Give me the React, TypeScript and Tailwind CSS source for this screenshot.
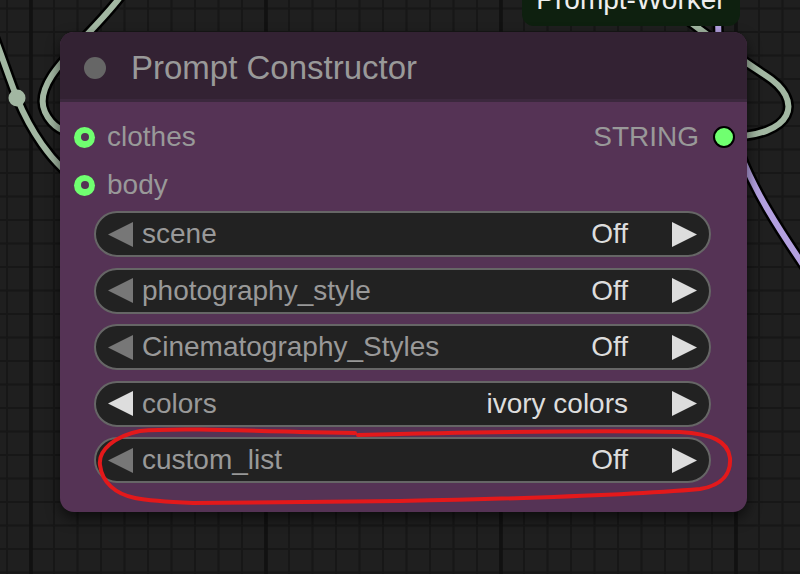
const font = "font-['Liberation_Sans',Arial,sans-serif]";

const widgets = [
  { name: "scene", value: "Off", canPrev: false },
  { name: "photography_style", value: "Off", canPrev: false },
  { name: "Cinematography_Styles", value: "Off", canPrev: false },
  { name: "colors", value: "ivory colors", canPrev: true },
  { name: "custom_list", value: "Off", canPrev: false },
];

const minorX = Array.from({ length: 35 }, (_, i) => 7 + i * 23.5);
const minorY = Array.from({ length: 25 }, (_, i) => 8.5 + i * 23.5);
const majorX = [31, 266, 501, 736];

const linkA = "M 121 -4 C 88 40, 30 80, 45 112 C 50 123, 60 134, 84 136";
const linkB = "M -12 20 C 0 50, 8 75, 17 98 C 28 125, 50 165, 84 185";
const linkC = "M 725 137 C 795 137, 805 100, 765 75 C 745 62, 720 45, 690 22";
const linkD = "M 718 10 C 718 130, 745 180, 810 275";

function CanvasBackdrop() {
  return (
    <svg className="absolute inset-0" width={800} height={574}>
      {minorX.map((x) => (
        <line key={"x" + x} x1={x} y1={0} x2={x} y2={574} stroke="#171717" strokeWidth={2} />
      ))}
      {minorY.map((y) => (
        <line key={"y" + y} x1={0} y1={y} x2={800} y2={y} stroke="#171717" strokeWidth={2} />
      ))}
      {majorX.map((x) => (
        <line key={"m" + x} x1={x} y1={0} x2={x} y2={574} stroke="#111111" strokeWidth={3.5} />
      ))}
      <g fill="none" strokeLinecap="round">
        <path d={linkA} stroke="#000" strokeWidth={11} />
        <path d={linkA} stroke="#a2b7a2" strokeWidth={6} />
        <path d={linkB} stroke="#000" strokeWidth={11} />
        <path d={linkB} stroke="#a2b7a2" strokeWidth={6} />
        <path d={linkC} stroke="#000" strokeWidth={11} />
        <path d={linkC} stroke="#a2b7a2" strokeWidth={6} />
        <path d={linkD} stroke="#000" strokeWidth={11} />
        <path d={linkD} stroke="#b3a0e0" strokeWidth={6} />
      </g>
      <circle cx={17} cy={98} r={8.5} fill="#a2b7a2" />
    </svg>
  );
}

function Triangle({ dir, on }: { dir: "left" | "right"; on: boolean }) {
  return (
    <svg width={25} height={25} viewBox="0 0 25 25" className="shrink-0">
      <polygon
        points={dir === "left" ? "25,0 0,12.5 25,25" : "0,0 25,12.5 0,25"}
        fill={on ? "#dddddd" : "#777777"}
      />
    </svg>
  );
}

function ComboWidget({ name, value, canPrev }: { name: string; value: string; canPrev: boolean }) {
  return (
    <div className="flex h-[46px] items-center rounded-full border-2 border-[#666] bg-[#222] pl-[12px] pr-[12px] text-[28px] leading-none">
      <Triangle dir="left" on={canPrev} />
      <span className="ml-[9px] text-[#999]">{name}</span>
      <span className="ml-auto text-[#ddd]">{value}</span>
      <span className="ml-[44px] flex">
        <Triangle dir="right" on />
      </span>
    </div>
  );
}

function InputDot() {
  return (
    <div className="flex h-[21px] w-[21px] items-center justify-center rounded-full bg-[#70ff70]">
      <div className="h-[8px] w-[8px] rounded-full bg-[#553355]" />
    </div>
  );
}

function PromptConstructor() {
  return (
    <div className="absolute left-[60px] top-[32px] flex h-[480px] w-[687px] flex-col overflow-hidden rounded-[14px] bg-[#553355] shadow-[0_6px_14px_rgba(0,0,0,0.6)]">
      <div className="flex h-[70px] shrink-0 items-center border-b-[3px] border-[#3b283d] bg-[#332233] pl-[24px] pt-[4px]">
        <div className="h-[22px] w-[22px] rounded-full bg-[#666]" />
        <span className="ml-[25px] text-[33px] leading-none text-[#999]">Prompt Constructor</span>
      </div>
      <div className="flex flex-col pt-[11px] text-[28px] leading-none text-[#999]">
        <div className="flex h-[48px] items-center pl-[14px] pr-[12px]">
          <InputDot />
          <span className="ml-[12px]">clothes</span>
          <span className="ml-auto">STRING</span>
          <div className="ml-[14px] h-[22px] w-[22px] rounded-full border-2 border-black bg-[#70ff70]" />
        </div>
        <div className="flex h-[48px] items-center pl-[14px]">
          <InputDot />
          <span className="ml-[12px]">body</span>
        </div>
        <div className="ml-[34px] mr-[36px] mt-[2px] flex flex-col gap-[10.5px]">
          {widgets.map((w) => (
            <ComboWidget key={w.name} {...w} />
          ))}
        </div>
      </div>
    </div>
  );
}

export default function App() {
  return (
    <div className={`relative h-[574px] w-[800px] overflow-hidden bg-[#1f1f1f] ${font}`}>
      <CanvasBackdrop />
      <div className="absolute left-[522px] top-[-30px] flex h-[56px] w-[218px] items-end justify-center rounded-b-[12px] bg-[#0e200f] pb-[12px]">
        <span className="text-[28px] leading-none text-[#eee]">Prompt-Worker</span>
      </div>
      <PromptConstructor />
      <svg className="pointer-events-none absolute inset-0" width={800} height={574}>
        <path
          d="M 355 433 L 300 432 C 230 430 170 428 140 431 C 115 436 98 450 100 465 C 102 482 115 494 135 498 C 150 501 170 502 193 503 L 400 501 C 500 499 620 496 700 489 C 724 485 731 472 730 458 C 728 441 712 434 680 432 C 600 430 480 432 358 435"
          fill="none"
          stroke="#e3191b"
          strokeWidth={4}
          strokeLinecap="round"
          strokeLinejoin="round"
        />
      </svg>
    </div>
  );
}
